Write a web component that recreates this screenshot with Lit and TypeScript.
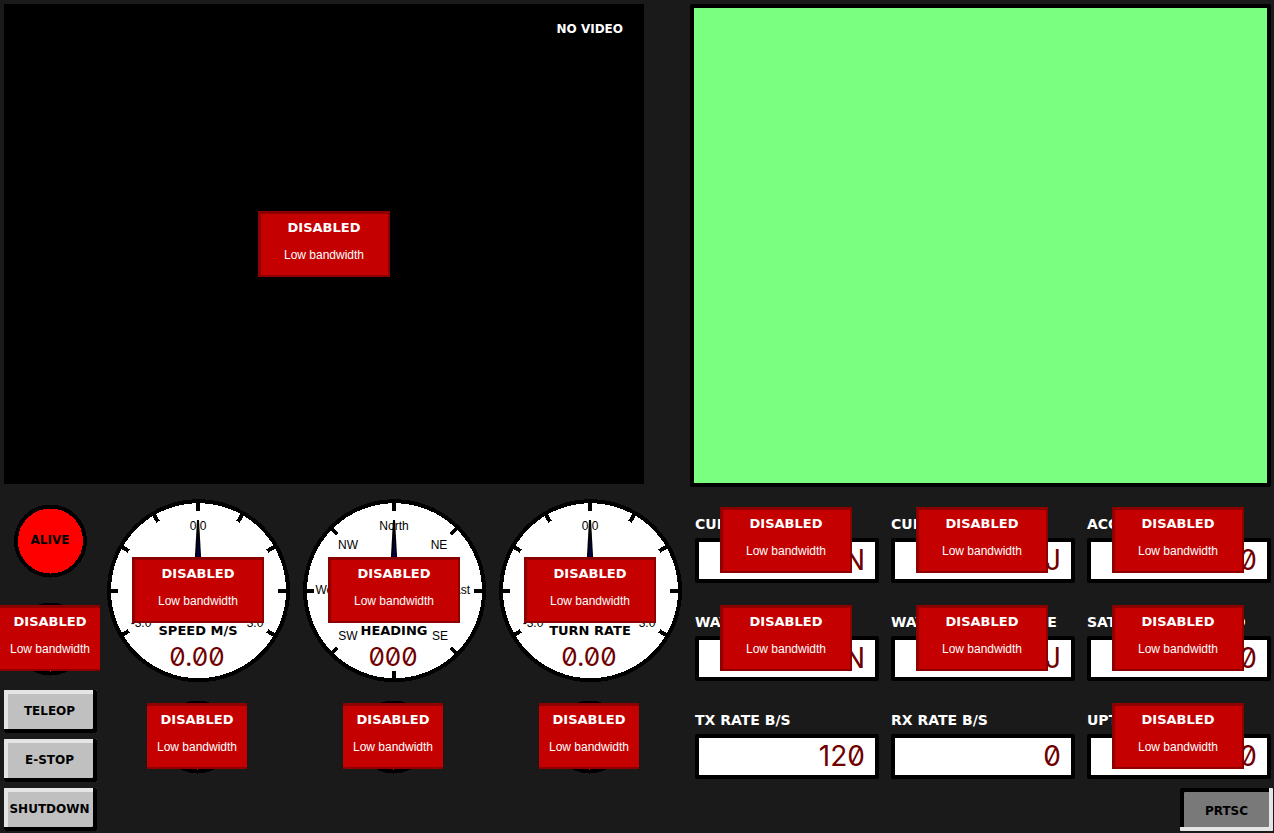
import { LitElement, html, svg, css, nothing } from "lit";
import { customElement, property } from "lit/decorators.js";

const displayFont = css`"DejaVu Sans", Verdana, sans-serif`;
const bodyFont = css`"Liberation Sans", Arial, sans-serif`;
const digitFont = css`Inter, "DejaVu Sans", sans-serif`;

@customElement("disabled-badge")
class DisabledBadge extends LitElement {
  static styles = css`
    :host {
      display: flex;
      flex-direction: column;
      align-items: center;
      box-sizing: border-box;
      width: 132px;
      height: 66px;
      padding: 5px 1px 0 0;
      border: solid #8e0000;
      border-width: 3px 2px 2px 3px;
      background: #c40000;
      color: #fff;
      white-space: nowrap;
    }
    .title {
      font: bold 13px/18px ${displayFont};
    }
    .reason {
      margin-top: 9px;
      font: 12px/18px ${bodyFont};
    }
  `;
  render() {
    return html`<span class="title">DISABLED</span><span class="reason">Low bandwidth</span>`;
  }
}

@customElement("status-lamp")
class StatusLamp extends LitElement {
  static styles = css`
    :host {
      display: block;
      position: relative;
      width: 100px;
      height: 98px;
      overflow: hidden;
    }
    svg {
      display: block;
    }
    circle {
      fill: #f00;
      stroke: #000;
      stroke-width: 4px;
      shape-rendering: crispEdges;
    }
    text {
      font: bold 12px ${displayFont};
      text-anchor: middle;
    }
    disabled-badge {
      position: absolute;
      top: 15px;
      left: 50%;
      transform: translateX(-50%);
    }
  `;
  @property() label = "";
  @property({ type: Boolean }) disabled = false;
  render() {
    return html`
      <svg width="100" height="98" viewBox="0 0 100 98" role="img" aria-label=${this.label || "Status"}>
        <circle cx="50.5" cy="49" r="34.5" />
        ${this.label ? svg`<text x="50" y="52">${this.label}</text>` : nothing}
      </svg>
      ${this.disabled ? html`<disabled-badge></disabled-badge>` : nothing}
    `;
  }
}

interface Mark {
  x: number;
  y: number;
  text: string;
}

@customElement("dial-gauge")
class DialGauge extends LitElement {
  static styles = css`
    :host {
      display: block;
      position: relative;
    }
    svg {
      display: block;
      width: 100%;
    }
    .face {
      fill: #fff;
      stroke: #000;
      stroke-width: 4px;
      shape-rendering: crispEdges;
    }
    .tick {
      stroke: #000;
      stroke-width: 4px;
      shape-rendering: crispEdges;
    }
    .needle {
      fill: #000;
    }
    .core {
      fill: #000060;
    }
    text {
      text-anchor: middle;
    }
    .mark {
      font: 12px ${bodyFont};
    }
    .title {
      font: bold 13px ${displayFont};
    }
    .value {
      font: 26px ${digitFont};
      font-feature-settings: "zero";
      fill: #700000;
    }
    disabled-badge {
      position: absolute;
      top: 50%;
      left: 50%;
      transform: translate(-50%, -50%);
    }
  `;
  @property() title = "";
  @property() value = "";
  @property({ attribute: false }) ticks: number[] = [];
  @property({ attribute: false }) marks: Mark[] = [];
  render() {
    return html`
      <svg viewBox="0 0 196 196">
        <circle class="face" cx="98.5" cy="98.7" r="89.5" />
        ${this.ticks.map(
          (a) => svg`<line class="tick" x1="98" x2="98" y1="8" y2="19" transform="rotate(${a} 98 99)" />`
        )}
        ${this.marks.map((m) => svg`<text class="mark" x=${m.x} y=${m.y}>${m.text}</text>`)}
        <path class="needle" d="M97 28 H99 L103 99 H93 Z" />
        <path class="core" d="M98 42 L102 99 H96 Z" />
        <text class="title" x="98" y="143">${this.title}</text>
        <text class="value" x="97" y="174">${this.value}</text>
      </svg>
      <disabled-badge></disabled-badge>
    `;
  }
}

@customElement("value-readout")
class ValueReadout extends LitElement {
  static styles = css`
    :host {
      display: block;
      position: relative;
      height: 98px;
    }
    label {
      display: block;
      padding-top: 23px;
      font: bold 14px/18px ${displayFont};
      color: #fff;
      white-space: nowrap;
    }
    output {
      display: block;
      box-sizing: border-box;
      height: 45px;
      margin-top: 5px;
      padding-right: 10px;
      border: 4px solid #000;
      border-radius: 2px;
      background: #fff;
      color: #700000;
      font: 28px/37px ${digitFont};
      font-feature-settings: "zero";
      text-align: right;
    }
    disabled-badge {
      position: absolute;
      top: 15px;
      left: calc(50% - 67px);
    }
  `;
  @property() label = "";
  @property() value = "";
  @property({ type: Boolean }) disabled = false;
  render() {
    return html`
      <label for="value">${this.label}</label>
      <output id="value">${this.value}</output>
      ${this.disabled ? html`<disabled-badge></disabled-badge>` : nothing}
    `;
  }
}

const RATE_TICKS = [-120, -90, -60, -30, 0, 30, 60, 90, 120];
const RATE_MARKS: Mark[] = [
  { x: 98, y: 38, text: "0.0" },
  { x: 41, y: 135, text: "-3.0" },
  { x: 155, y: 135, text: "3.0" },
];
const COMPASS_TICKS = [0, 45, 90, 135, 180, 225, 270, 315];
const COMPASS_MARKS: Mark[] = [
  { x: 98, y: 38, text: "North" },
  { x: 52, y: 57, text: "NW" },
  { x: 143, y: 57, text: "NE" },
  { x: 33, y: 102, text: "West" },
  { x: 162, y: 102, text: "East" },
  { x: 52, y: 148, text: "SW" },
  { x: 144, y: 148, text: "SE" },
];

const GAUGES = [
  { title: "SPEED M/S", value: "0.00", ticks: RATE_TICKS, marks: RATE_MARKS },
  { title: "HEADING", value: "000", ticks: COMPASS_TICKS, marks: COMPASS_MARKS },
  { title: "TURN RATE", value: "0.00", ticks: RATE_TICKS, marks: RATE_MARKS },
];

const READOUTS = [
  { label: "CURRENT", value: "N", disabled: true },
  { label: "CURRENT", value: "J", disabled: true },
  { label: "ACCURACY", value: "0", disabled: true },
  { label: "WAYPOINT", value: "N", disabled: true },
  { label: "WAYPOINT DISTANCE", value: "J", disabled: true },
  { label: "SATELLITES LOCKED", value: "0", disabled: true },
  { label: "TX RATE B/S", value: "120", disabled: false },
  { label: "RX RATE B/S", value: "0", disabled: false },
  { label: "UPTIME", value: "0", disabled: true },
];

@customElement("app-root")
class AppRoot extends LitElement {
  static styles = css`
    :host {
      display: grid;
      grid-template-columns: minmax(0, 688fr) minmax(0, 586fr);
      grid-template-rows: auto 1fr;
      row-gap: 5px;
      box-sizing: border-box;
      min-height: 100vh;
      background: #1a1a1a;
      overflow: hidden;
    }
    .video {
      position: relative;
      aspect-ratio: 4 / 3;
      margin: 4px 44px 3px 4px;
      background: #000;
    }
    .notice {
      padding: 16px 21px 0 0;
      color: #fff;
      font: bold 12px/18px ${displayFont};
      text-align: right;
    }
    .video disabled-badge {
      position: absolute;
      top: 50%;
      left: 50%;
      transform: translate(-50%, -50%);
    }
    .map {
      margin: 4px 3px 0 2px;
      border: 4px solid #000;
      border-radius: 2px;
      background: #7bff80;
    }
    .controls {
      display: flex;
      align-items: flex-start;
    }
    .side {
      display: flex;
      flex-direction: column;
      flex: 0 0 100px;
    }
    .buttons {
      display: flex;
      flex-direction: column;
      gap: 6px;
      padding: 2px 3px 2px 4px;
    }
    .gauges {
      display: grid;
      flex: 1;
      grid-template-columns: repeat(3, minmax(0, 1fr));
    }
    .lamp {
      display: flex;
      justify-content: center;
      padding-right: 2px;
    }
    button {
      width: 93px;
      height: 43px;
      padding: 0 2px 2px 0;
      border: 0;
      border-radius: 1px;
      background: #c0c0c0;
      box-shadow: inset -4px -4px #000, inset 4px 4px #e5e5e5;
      color: #000;
      font: bold 12px/18px ${displayFont};
    }
    .pressed {
      padding: 2px 0 0;
      background: #797979;
      box-shadow: inset -4px -4px #e5e5e5, inset 4px 4px #000;
    }
    .data {
      display: flex;
      flex-direction: column;
    }
    .readouts {
      display: grid;
      grid-template-columns: repeat(3, minmax(0, 1fr));
      column-gap: 12px;
      padding: 0 3px 0 7px;
    }
    .actions {
      display: flex;
      justify-content: flex-end;
      padding: 2px 1px 2px 0;
    }
  `;
  render() {
    return html`
      <section class="video">
        <div class="notice">NO VIDEO</div>
        <disabled-badge></disabled-badge>
      </section>
      <section class="map"></section>
      <section class="controls">
        <div class="side">
          <status-lamp label="ALIVE"></status-lamp>
          <status-lamp disabled></status-lamp>
          <div class="buttons">
            <button>TELEOP</button>
            <button>E-STOP</button>
            <button>SHUTDOWN</button>
          </div>
        </div>
        <div class="gauges">
          ${GAUGES.map(
            (g) => html`<dial-gauge
              .title=${g.title}
              .value=${g.value}
              .ticks=${g.ticks}
              .marks=${g.marks}
            ></dial-gauge>`
          )}
          ${GAUGES.map(() => html`<div class="lamp"><status-lamp disabled></status-lamp></div>`)}
        </div>
      </section>
      <section class="data">
        <div class="readouts">
          ${READOUTS.map(
            (r) => html`<value-readout
              .label=${r.label}
              .value=${r.value}
              .disabled=${r.disabled}
            ></value-readout>`
          )}
        </div>
        <div class="actions"><button class="pressed">PRTSC</button></div>
      </section>
    `;
  }
}
